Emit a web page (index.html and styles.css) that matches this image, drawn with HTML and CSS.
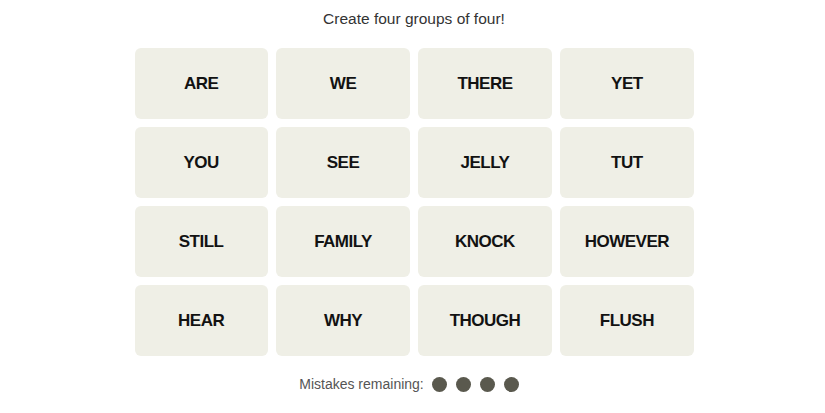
FILE: index.html
```html
<!DOCTYPE html>
<html>
  <head>
    <title>Connections</title>
    <link rel="stylesheet" href="styles.css">
  </head>
  <body>
    <div class="game">
      <p class="prompt">Create four groups of four!</p>
      <div class="board">
        <div class="tile">ARE</div>
        <div class="tile">WE</div>
        <div class="tile">THERE</div>
        <div class="tile">YET</div>
        <div class="tile">YOU</div>
        <div class="tile">SEE</div>
        <div class="tile">JELLY</div>
        <div class="tile">TUT</div>
        <div class="tile">STILL</div>
        <div class="tile">FAMILY</div>
        <div class="tile">KNOCK</div>
        <div class="tile">HOWEVER</div>
        <div class="tile">HEAR</div>
        <div class="tile">WHY</div>
        <div class="tile">THOUGH</div>
        <div class="tile">FLUSH</div>
      </div>
      <div class="mistakes">
        <span class="mistakes-label">Mistakes remaining:</span>
        <span class="dots">
          <span class="dot"></span>
          <span class="dot"></span>
          <span class="dot"></span>
          <span class="dot"></span>
        </span>
      </div>
    </div>
  </body>
</html>
```

FILE: styles.css
```css
body {
  margin: 0;
  padding: 0;
  background: #fff;
  font-family: "Liberation Sans", Arial, sans-serif;
  color: #000;
}

.game {
  width: 559px;
  margin: 0 auto;
  padding-top: 8px;
  padding-left: 3px;
}

.prompt {
  margin: 0;
  height: 40px;
  line-height: 22px;
  text-align: center;
  font-size: 15.5px;
  color: #333;
}

.board {
  display: grid;
  grid-template-columns: repeat(4, 1fr);
  grid-auto-rows: 71px;
  column-gap: 8.7px;
  row-gap: 8px;
}

.tile {
  display: flex;
  align-items: center;
  justify-content: center;
  background-color: #efefe6;
  border-radius: 6px;
  font-weight: bold;
  font-size: 17px;
  letter-spacing: -0.5px;
  color: #121212;
}

.mistakes {
  display: flex;
  justify-content: center;
  align-items: center;
  margin-top: 20px;
  height: 16px;
  font-size: 14px;
  color: #555;
  padding-right: 10px;
}

.dots {
  display: flex;
  gap: 9px;
  margin-left: 8px;
}

.dot {
  width: 15px;
  height: 15px;
  border-radius: 50%;
  background-color: #5a594e;
}
```
